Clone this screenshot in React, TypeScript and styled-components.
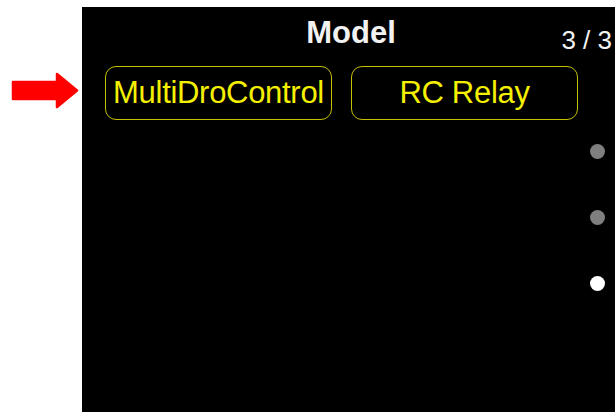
import styled, { createGlobalStyle } from "styled-components";

const GlobalStyle = createGlobalStyle`
  html, body {
    margin: 0;
    padding: 0;
    background: #ffffff;
    font-family: "Liberation Sans", Arial, sans-serif;
  }
`;

const models = ["MultiDroControl", "RC Relay"];
const pages = [false, false, true];

const Screen = styled.div`
  display: flex;
  width: 615px;
  height: 412px;
  overflow: hidden;
`;

const ArrowGutter = styled.div`
  flex-shrink: 0;
  width: 82px;
  padding: 72px 0 0 11px;
  box-sizing: border-box;
`;

const Panel = styled.main`
  flex: 1;
  margin-top: 7px;
  background: #000000;
  display: flex;
  flex-direction: column;
`;

const Header = styled.header`
  display: grid;
  grid-template-columns: 1fr auto 1fr;
  height: 59px;
  padding: 10px 3px 0 0;
  box-sizing: border-box;
`;

const Title = styled.h1`
  grid-column: 2;
  margin: 0 0 0 8px;
  font-size: 31px;
  line-height: 31px;
  font-weight: bold;
  color: #f2f2f2;
`;

const Counter = styled.span`
  grid-column: 3;
  justify-self: end;
  margin-top: 10px;
  font-size: 26px;
  line-height: 26px;
  color: #f2f2f2;
`;

const Body = styled.div`
  display: flex;
  justify-content: space-between;
  align-items: flex-start;
`;

const ModelList = styled.div`
  display: flex;
  gap: 19px;
  padding-left: 23px;
`;

const ModelButton = styled.button`
  width: 227px;
  height: 54px;
  border: 1.5px solid #c4bf00;
  border-radius: 11px;
  background: transparent;
  color: #f4f000;
  font-family: "Liberation Sans", Arial, sans-serif;
  font-size: 31px;
  padding: 0;
  white-space: nowrap;
  letter-spacing: -0.3px;
`;

const Dots = styled.div`
  display: flex;
  flex-direction: column;
  gap: 51px;
  margin: 78px 10px 0 0;
`;

const Dot = styled.span<{ $active: boolean }>`
  width: 15px;
  height: 15px;
  border-radius: 50%;
  background: ${(p) => (p.$active ? "#ffffff" : "#7f7f7f")};
`;

const Arrow = () => (
  <svg width="68" height="37" viewBox="0 0 68 37">
    <polygon
      points="2,10 46,10 46,2 66,18.5 46,35 46,27 2,27"
      fill="#ff0000"
      stroke="#ff0000"
      strokeWidth="2.5"
      strokeLinejoin="round"
    />
  </svg>
);

const App = () => {
  return (
    <Screen>
      <GlobalStyle />
      <ArrowGutter>
        <Arrow />
      </ArrowGutter>
      <Panel>
        <Header>
          <Title>Model</Title>
          <Counter>3 / 3</Counter>
        </Header>
        <Body>
          <ModelList>
            {models.map((m) => (
              <ModelButton key={m}>{m}</ModelButton>
            ))}
          </ModelList>
          <Dots>
            {pages.map((active, i) => (
              <Dot key={i} $active={active} />
            ))}
          </Dots>
        </Body>
      </Panel>
    </Screen>
  );
};

export default App;
